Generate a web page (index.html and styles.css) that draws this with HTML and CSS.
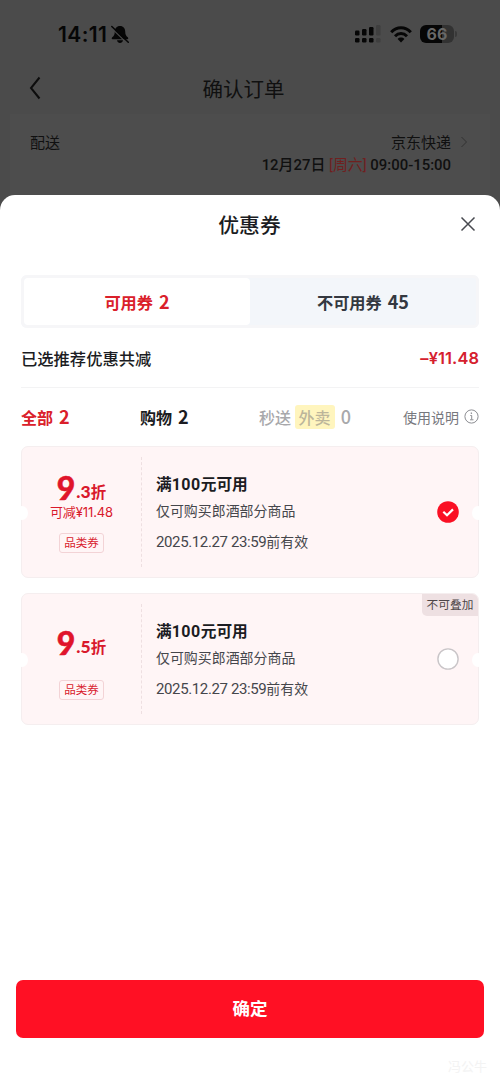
FILE: index.html
```html
<!DOCTYPE html>
<html lang="zh-CN">
<head>
<meta charset="utf-8">
<title>确认订单</title>
<link rel="stylesheet" href="styles.css">
</head>
<body>
<div class="screen">
  <div class="status">
    <span class="clock">14:11</span>
    <svg class="bell" width="18" height="19" viewBox="0 0 18 19"><path d="M9 1C5.600 1 3.800 3.700 3.800 6.400c0 3.500-1.200 4.600-2.600 5.800-.9.800-.6 2 .5 2h14.600c1.100 0 1.400-1.200.5-2-1.400-1.200-2.600-2.300-2.600-5.800C14.200 3.700 12.400 1 9 1zM6 15.300c.4 1.700 1.500 2.600 3 2.600s2.600-.9 3-2.600z" fill="#060606"/><path d="M0 2.600L16.500 18.600" stroke="#4b4b4b" stroke-width="1.200"/><path d="M.8 1.500L17.300 17.200" stroke="#060606" stroke-width="1.500" stroke-linecap="round"/></svg>
    <svg class="signal" width="26" height="18" viewBox="0 0 26 18" fill="#060606"><rect y="5.500" width="4.500" height="5" rx="1.200"/><rect x="7" y="4" width="4.500" height="6.500" rx="1.200"/><rect x="14" y="2" width="4.500" height="8.500" rx="1.200"/><rect y="13" width="4.500" height="4.500" rx="1.200"/><rect x="7" y="13" width="4.500" height="4.500" rx="1.200"/><rect x="14" y="13" width="4.500" height="4.500" rx="1.200"/><g fill="#3f3f3f"><rect x="21" y="0" width="4.500" height="10.500" rx="1.200"/><rect x="21" y="13" width="4.500" height="4.500" rx="1.200"/></g></svg>
    <svg class="wifi" width="22" height="17" viewBox="0 0 22 17" fill="none" stroke="#060606" stroke-width="3"><path d="M1.200 6.200C6.800.4 15.200.4 20.800 6.200"/><path d="M5 10.200c3.500-3.500 8.500-3.500 12 0"/><path d="M11 16.400L7.600 13c1.900-1.900 4.900-1.900 6.800 0z" fill="#060606" stroke="none"/></svg>
    <span class="battery">66</span><i class="cap"></i>
  </div>
  <div class="nav">
    <svg class="back" width="12" height="24" viewBox="0 0 12 24"><path d="M10.500 1.500L2 12l8.500 10.500" fill="none" stroke="#0d0d0d" stroke-width="2"/></svg>
    <h1>确认订单</h1>
  </div>
  <div class="order">
    <span class="ship">配送</span>
    <div class="method">
      <div class="carrier">京东快递<svg width="8" height="12" viewBox="0 0 8 12"><path d="M1.500 1l5 5-5 5" fill="none" stroke="#323232"/></svg></div>
      <div class="when">12月27日 <b>[周六]</b> 09:00-15:00</div>
    </div>
  </div>
  <main class="sheet">
    <div class="heading"><h2>优惠券</h2><svg class="close" width="16" height="16" viewBox="0 0 16 16"><path d="M1.500 1.500l13 13M14.500 1.500l-13 13" stroke="#484a50" stroke-width="1.500"/></svg></div>
    <div class="tabs"><div class="tab on">可用券<span class="count">2</span></div><div class="tab">不可用券<span class="count">45</span></div></div>
    <div class="summary"><span>已选推荐优惠共减</span><span class="saved">–¥11.48</span></div>
    <div class="filters">
      <span class="all">全部<span class="count">2</span></span><span class="shop">购物<span class="count">2</span></span><span class="fast">秒送 <mark>外卖</mark><span class="count">0</span></span>
      <span class="help">使用说明<svg width="15" height="15" viewBox="0 0 15 15" fill="none" stroke="#8c8d92"><circle cx="7.500" cy="7.500" r="6.600"/><path d="M6.300 6.500h1.400v4M6 10.800h3.500"/><path d="M7.400 3.500v1.400" stroke-width="1.300"/></svg></span>
    </div>
    <section class="coupon">
      <div class="value"><div class="rate"><strong>9</strong><b>.3</b><span>折</span></div><div class="less">可减¥11.48</div><span class="kind">品类券</span></div>
      <div class="detail"><h3>满<em>100</em>元可用</h3><p>仅可购买郎酒部分商品</p><time><span>2025.12.27 23:59</span>前有效</time></div>
      <svg class="radio" width="22" height="22" viewBox="0 0 22 22"><circle cx="11" cy="11" r="10.800" fill="#fa1024"/><path d="M6.300 10.800l3.700 3.500 6-5.900" fill="none" stroke="#fff" stroke-width="2.200"/></svg>
    </section>
    <section class="coupon plain">
      <div class="value"><div class="rate"><strong>9</strong><b>.5</b><span>折</span></div><span class="kind">品类券</span></div>
      <div class="detail"><h3>满<em>100</em>元可用</h3><p>仅可购买郎酒部分商品</p><time><span>2025.12.27 23:59</span>前有效</time></div>
      <svg class="radio" width="22" height="22" viewBox="0 0 22 22"><circle cx="11" cy="11" r="10.100" fill="#fff" stroke="#c9c5c8" stroke-width="1.400"/></svg>
      <span class="badge">不可叠加</span>
    </section>
    <button class="confirm">确定</button>
    <span class="sign">冯公牛</span>
  </main>
</div>
</body>
</html>
```
FILE: styles.css
```css
* { box-sizing: border-box; margin: 0; }
body { background: #4b4b4b; font-family: "Noto Sans CJK SC", sans-serif; color: #1b1c22; }
.screen { width: 500px; height: 1084px; display: flex; flex-direction: column; overflow: hidden; white-space: nowrap; }

.status { height: 68px; padding-left: 58px; display: flex; align-items: center; flex: none; }
.clock { width: 51px; padding-top: 1px; font: 600 21px/24px Inter, sans-serif; letter-spacing: 0.4px; color: #060606; }
.bell { margin-left: 2px; }
.signal { margin-left: 226px; }
.wifi { margin-left: 9px; }
.battery { margin-left: 8px; width: 34px; height: 18px; border-radius: 6px; background: linear-gradient(90deg, #060606 66%, #323232 66%); color: #686868; font: 700 16px/18px Inter, sans-serif; text-align: center; }
.cap { width: 2px; height: 6px; margin-left: 1px; background: #393939; border-radius: 0 2px 2px 0; }

.nav { height: 46px; flex: none; display: grid; grid-template-columns: 42px 1fr 55px; align-items: center; padding-bottom: 6px; }
.back { margin-left: 29px; }
.nav h1 { text-align: center; font-weight: 400; font-size: 20.5px; line-height: 30px; color: #101010; }

.order { height: 81px; flex: none; margin: 0 10px; padding: 17px 22px 0 20px; background: #4d4d4d; display: flex; justify-content: space-between; font-size: 15px; line-height: 22px; color: #101010; }
.carrier { text-align: right; }
.carrier svg { margin-left: 9px; }
.when { margin-right: 17px; padding-top: 1px; text-align: right; font: 500 14.9px/22px Roboto, "Noto Sans CJK SC", sans-serif; }
.when b { font-weight: 400; color: #70201f; }

.sheet { position: relative; flex: 1; background: #fff; border-radius: 15px 15px 0 0; padding: 0 21px; display: flex; flex-direction: column; }
.heading { height: 80px; padding-top: 14px; display: grid; grid-template-columns: 1fr 19px; padding-left: 18px; }
.heading h2 { text-align: center; font-size: 20.8px; line-height: 30px; font-weight: 500; }
.close { margin: 7px 0 0; }
.tabs { height: 53px; padding: 3px; border-radius: 6px; background: #f3f6fa; box-shadow: inset 0 0 0 3px #f6f6f8; display: flex; }
.tab { flex: 1; color: #343840; font-size: 16.2px; font-weight: 700; line-height: 46px; text-align: center; }
.tab.on { background: #fff; color: #da202a; border-radius: 4px; }
.count { margin-left: 6px; font-size: 18px; }
.summary { height: 60px; display: flex; justify-content: space-between; font-size: 16.3px; line-height: 60px; font-weight: 500; border-bottom: 1px solid #f3f3f4; }
.saved { font-family: Inter, sans-serif; font-weight: 600; font-size: 16.4px; letter-spacing: 0.1px; color: #d5202e; }
.filters { height: 58px; padding-bottom: 1px; display: flex; align-items: center; font-size: 16px; line-height: 24px; font-weight: 500; }
.all { width: 119px; font-weight: 700; color: #da202a; }
.shop { width: 119px; font-weight: 700; }
.fast { color: #a8a8ab; }
.fast mark { color: #bcb59b; background: #fff5be; border-radius: 3px; padding: 0 4px; }
.help { margin-left: auto; display: flex; align-items: center; gap: 5px; font-size: 14px; font-weight: 400; color: #77787d; }
.filters .count { line-height: 24px; }

.coupon { position: relative; height: 132px; margin-bottom: 15px; flex: none; display: flex; border: 1px solid #f5eeef; border-radius: 7px; background: #fff5f6; }
.coupon::before, .coupon::after { content: ""; position: absolute; top: 59px; width: 12px; height: 14px; border-radius: 50%; background: #fff; }
.coupon::before { left: -6px; }
.coupon::after { right: -6px; }
.value { width: 120px; margin: 10px 0; padding-top: 14px; border-right: 1px dashed #eedfe1; display: flex; flex-direction: column; align-items: center; color: #d9192c; }
.rate { height: 33px; display: flex; align-items: flex-end; font-weight: 700; font-size: 15.500px; line-height: 26px; }
.rate strong { font: 900 32px/33px Lato, sans-serif; margin-right: 1px; color: #e0142b; -webkit-text-stroke: 0.5px #e0142b; }
.rate b { font: 900 17.500px/25px Lato, sans-serif; }
.less { height: 17px; font: 400 13px/16px Inter, "Noto Sans CJK SC", sans-serif; letter-spacing: -0.1px; }
.kind { margin-top: 12px; height: 20px; width: 45px; border: 1px solid #f3d3d6; border-radius: 3px; font-size: 11.5px; line-height: 17px; text-align: center; }
.plain .value { padding-top: 22px; }
.plain .kind { margin-top: 21px; }
.detail { padding: 25px 0 0 14px; }
.detail h3 { font-size: 15.700px; line-height: 24px; font-weight: 700; }
.detail em { font: 700 16px Roboto, sans-serif; letter-spacing: 0.5px; }
.detail p { margin-top: 2px; font-size: 13.950px; line-height: 24px; color: #45464b; }
.detail time { display: block; margin-top: 7px; font-size: 13.900px; line-height: 24px; color: #45464b; }
.detail time span { font-family: Roboto, sans-serif; font-size: 15px; letter-spacing: -0.38px; }
.radio { position: relative; margin: 54px 19px 0 auto; }
.badge { position: absolute; top: 0; right: 0; width: 56px; height: 22px; border-radius: 0 6px 0 5px; background: #eee0e2; color: #4d4648; font-size: 11.700px; line-height: 20px; text-align: center; }

.confirm { height: 58px; margin: auto -5px 46px; padding-bottom: 4px; flex: none; border: 0; border-radius: 7px; background: #ff1024; color: #fff; font: 700 17.500px "Noto Sans CJK SC", sans-serif; }
.sign { position: absolute; right: 13px; bottom: 8px; font-size: 13px; line-height: 20px; color: #f3f3f3; }
```
